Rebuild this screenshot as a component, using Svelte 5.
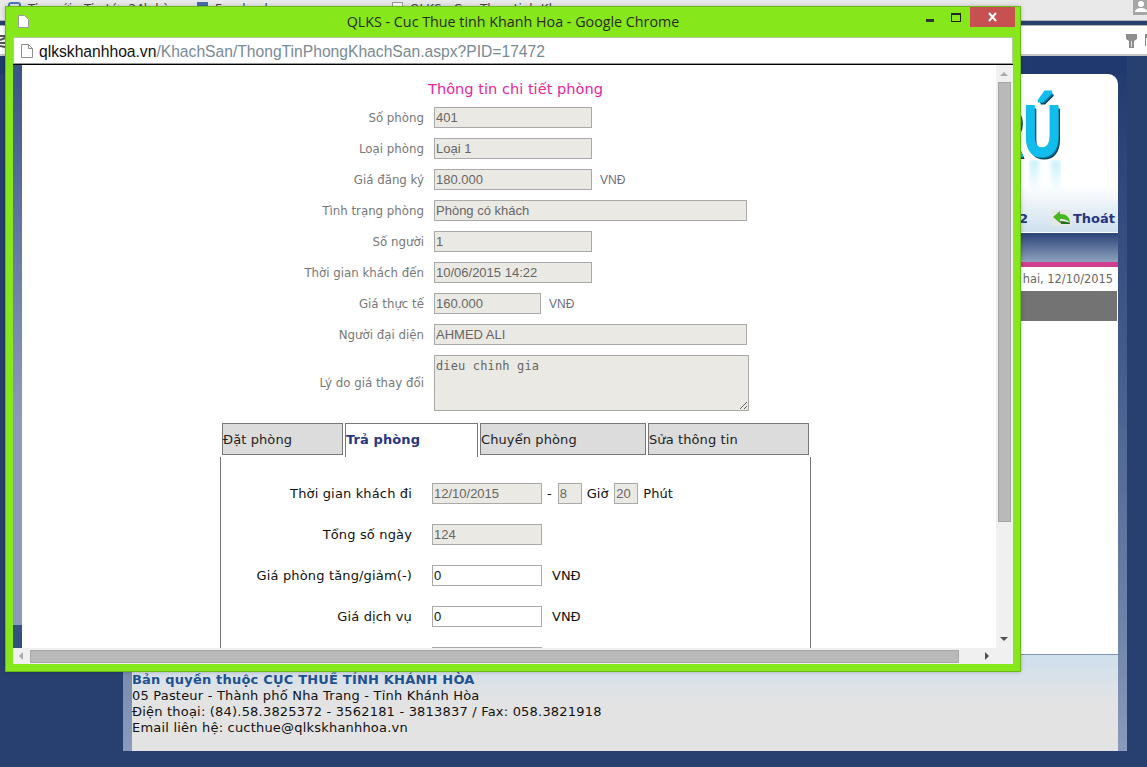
<script>
    // Rooms form, top part of the popup
    const topRows = [
        { label: "Số phòng", value: "401", size: "md" },
        { label: "Loại phòng", value: "Loại 1", size: "md" },
        { label: "Giá đăng ký", value: "180.000", size: "md", unit: "VNĐ" },
        { label: "Tình trạng phòng", value: "Phòng có khách", size: "lg" },
        { label: "Số người", value: "1", size: "md" },
        { label: "Thời gian khách đến", value: "10/06/2015 14:22", size: "md" },
        { label: "Giá thực tế", value: "160.000", size: "sm", unit: "VNĐ" },
        { label: "Người đại diện", value: "AHMED ALI", size: "lg" }
    ];

    const tabs = ["Đặt phòng", "Trả phòng", "Chuyển phòng", "Sửa thông tin"];
    const activeTab = "Trả phòng";

    // Rows inside the "Trả phòng" tab
    const payRows = [
        { label: "Tổng số ngày", value: "124", readonly: true },
        { label: "Giá phòng tăng/giảm(-)", value: "0", unit: "VNĐ" },
        { label: "Giá dịch vụ", value: "0", unit: "VNĐ" },
        { label: "", value: "" }
    ];
</script>

<div class="desktop">
    <!-- Browser behind the popup -->
    <div class="tabstrip">
        <span class="btab"><i class="fav round"></i>Tin mới - Tin tức 24h hàng ngày</span>
        <span class="btab fb"><i class="fav blue"></i>Facebook</span>
        <span class="btab third"><i class="fav paper"></i>QLKS - Cuc Thue tinh Khanh Hoa</span>
        <span class="avatar">
            <svg width="14" height="15" viewBox="0 0 14 15"><circle cx="8" cy="4" r="3" fill="#fff"/><path d="M2 12c0-3 3-4 6-4s6 1 6 4z" fill="#fff"/></svg>
        </span>
    </div>
    <div class="toolbar">
        <svg class="tool-left" width="6" height="14" viewBox="0 0 6 14"><path d="M0 2h5M0 6l5-2M0 9h6M0 12l5 1" stroke="#555" stroke-width="2" fill="none"/></svg>
        <svg width="11" height="15" viewBox="0 0 11 15"><path d="M0 1h11v5l-3 2v7H3V8L0 6z" fill="#8d8d8d"/><path d="M5.500 8v6" stroke="#ddd"/></svg>
        <svg width="2" height="12" viewBox="0 0 2 12"><path d="M0 0h2v4H1v8H0z" fill="#888"/></svg>
    </div>
    <div class="page">
        <div class="card">
            <header class="head">
                <div class="logo">RÚ</div>
                <div class="reflect"></div>
                <nav class="nav">
                    <span>2</span>
                    <span class="logout">
                        <svg width="20" height="16" viewBox="0 0 20 16"><rect width="20" height="16" fill="#e4e8e6"/><path d="M1 7l7-6v3c6 0 10 3 10 9-2-3-5-4-10-4v4z" fill="#45b81f"/><path d="M8 11c5 0 8 1 10 2v1H9z" fill="#2b6d1a"/></svg>
                        Thoát
                    </span>
                </nav>
            </header>
            <div class="band"></div>
            <div class="date">Thứ hai, 12/10/2015</div>
            <div class="graybar"></div>
            <div class="main"></div>
            <footer class="foot">
                <b>Bản quyền thuộc CỤC THUẾ TỈNH KHÁNH HÒA</b>
                <div>05 Pasteur - Thành phố Nha Trang - Tỉnh Khánh Hòa</div>
                <div>Điện thoại: (84).58.3825372 - 3562181 - 3813837 / Fax: 058.3821918</div>
                <div>Email liên hệ: cucthue@qlkskhanhhoa.vn</div>
            </footer>
        </div>
    </div>

    <!-- Popup window -->
    <div class="window">
        <div class="titlebar">
            <svg class="pageicon" width="11" height="13" viewBox="0 0 11 13"><path d="M.5.5h6l4 4v8H.5z" fill="#fff" stroke="#9a9a9a"/></svg>
            <span class="wintitle">QLKS - Cuc Thue tinh Khanh Hoa - Google Chrome</span>
            <div class="controls">
                <span class="min"></span>
                <span class="max"></span>
                <span class="close">
                    <svg width="11" height="10" viewBox="0 0 11 10"><path d="M2 1l7 8M9 1l-7 8" stroke="#fff" stroke-width="2"/></svg>
                </span>
            </div>
        </div>
        <div class="urlbar">
            <svg width="14" height="16" viewBox="0 0 14 16"><path d="M1.500 1.500h7l4 4v9h-11z" fill="#fff" stroke="#8f8f8f"/><path d="M8.500 1.500v4h4" fill="none" stroke="#8f8f8f"/></svg>
            <span class="url"><span class="host">qlkskhanhhoa.vn</span>/KhachSan/ThongTinPhongKhachSan.aspx?PID=17472</span>
        </div>
        <div class="viewport">
            <div class="gutter"></div>
            <div class="content">
                <div class="form">
                    <h1>Thông tin chi tiết phòng</h1>
                    <div class="rows">
                        {#each topRows as row}
                            <label for={row.label}>{row.label}</label>
                            <div class="field">
                                <input id={row.label} class={row.size} value={row.value} readonly />
                                {#if row.unit}<span class="unit">{row.unit}</span>{/if}
                            </div>
                        {/each}
                        <label for="reason">Lý do giá thay đổi</label>
                        <textarea id="reason" readonly>dieu chinh gia</textarea>
                    </div>
                    <div class="tabs">
                        {#each tabs as tab}
                            <div class="tab" class:active={tab === activeTab}>{tab}</div>
                        {/each}
                    </div>
                    <div class="panel">
                        <div class="payrows">
                            <span class="paylabel">Thời gian khách đi</span>
                            <div class="field dark">
                                <input class="date-in" value="12/10/2015" readonly />
                                <span class="dash">-</span>
                                <input class="tiny" value="8" readonly />
                                <span class="hour">Giờ</span>
                                <input class="tiny" value="20" readonly />
                                <span>Phút</span>
                            </div>
                            {#each payRows as row}
                                <span class="paylabel">{row.label}</span>
                                <div class="field dark">
                                    <input class="date-in" class:edit={!row.readonly} value={row.value} readonly={row.readonly} />
                                    {#if row.unit}<span class="payunit">{row.unit}</span>{/if}
                                </div>
                            {/each}
                        </div>
                    </div>
                </div>
            </div>
            <div class="vscroll">
                <i class="arrow up"></i>
                <div class="vthumb"></div>
                <i class="arrow down"></i>
            </div>
        </div>
        <div class="hscroll">
            <i class="arrow left"></i>
            <div class="hthumb"></div>
            <i class="arrow right"></i>
        </div>
    </div>
</div>

<style>
    :global(body) {
        margin: 0;
        background: #27406f;
    }

    .desktop {
        position: relative;
        width: 1147px;
        height: 767px;
        overflow: hidden;
        background: #27406f;
        font-family: "DejaVu Sans", sans-serif;
        font-size: 12px;
    }

    /* Browser behind */
    .tabstrip {
        height: 20px;
        background: #e9e9e9;
        border-bottom: 1px solid #b5b5b5;
        display: flex;
        font-size: 12px;
        color: #444;
        overflow: hidden;
        position: relative;
    }

    .btab {
        display: flex;
        gap: 7px;
        height: 18px;
        box-sizing: border-box;
        padding: 2px 0 0 8px;
        width: 188px;
        white-space: nowrap;
        overflow: hidden;
    }

    .btab.fb {
        width: 194px;
        padding-left: 9px;
    }

    .btab.third {
        padding-left: 10px;
    }

    .fav {
        width: 11px;
        height: 11px;
        flex: none;
        display: block;
    }

    .round { border: 2px solid #4a78b8; border-radius: 3px; width: 9px; height: 9px; }
    .blue { background: #4a6ea9; }
    .paper { background: #fff; border: 1px solid #999; width: 9px; height: 10px; }

    .avatar {
        position: absolute;
        right: 0;
        top: 0;
        width: 14px;
        height: 15px;
        background: #a6a6a6;
    }

    .avatar svg { display: block; }

    .toolbar {
        height: 28px;
        margin-top: 4px;
        background: #fff;
        border-top: 1px solid #b5b5b5;
        border-bottom: 2px solid #c8c8c8;
        display: flex;
        align-items: center;
        justify-content: flex-end;
        gap: 8px;
        position: relative;
    }

    .tool-left {
        position: absolute;
        left: 0;
        top: 8px;
    }

    .page {
        padding: 18px 20px 16px 123px;
        background: linear-gradient(to right, #203a70 1127px, #27406f 1127px) no-repeat;
        background-size: 100% 18px;
    }

    .card {
        width: 986px;
        padding: 0 9px;
        background: linear-gradient(#233c70, #42598a 40%, #6d82a8 80%, #8a9abb);
        display: flex;
        flex-direction: column;
        height: 677px;
    }

    .head {
        position: relative;
        height: 158px;
        background: linear-gradient(#fff 0, #fff 70%, #cfe0ee 100%);
        border-radius: 0 10px 0 0;
        overflow: hidden;
        border-bottom: 1px solid #fff;
    }

    .logo {
        position: absolute;
        right: 57px;
        top: 21px;
        font: bold 72px/1 "Liberation Sans", sans-serif;
        color: #10bdec;
        -webkit-text-stroke: 2px #10bdec;
        text-shadow: 2px 2px 0 #0a6f93, 3px 3px 0 #063a50;
        transform: scaleX(0.72);
        transform-origin: right center;
    }

    /* Faded mirror image under the logo */
    .reflect {
        position: absolute;
        right: 57px;
        top: 86px;
        width: 32px;
        height: 32px;
        background: linear-gradient(to right, #9fe6f8 30%, transparent 30%, transparent 70%, #9fe6f8 70%);
        filter: blur(2px);
        opacity: 0.6;
        -webkit-mask-image: linear-gradient(#000, transparent);
        mask-image: linear-gradient(#000, transparent);
    }

    .nav {
        position: absolute;
        right: 3px;
        bottom: 6px;
        display: flex;
        align-items: center;
        gap: 24px;
        font-size: 13px;
        font-weight: bold;
        color: #28367f;
    }

    .logout {
        display: flex;
        align-items: center;
        gap: 1px;
    }

    .band {
        height: 29px;
        background: linear-gradient(#2a4477, #8fa1be);
        border-bottom: 5px solid #d0408f;
    }

    .date {
        height: 24px;
        line-height: 24px;
        background: #fff;
        text-align: right;
        padding-right: 5px;
        font-size: 11.4px;
        color: #666;
    }

    .graybar {
        height: 30px;
        background: #737373;
        margin-right: 1px;
        box-shadow: 1px 0 0 #fff;
    }

    .main {
        flex: 1;
        background: #fff;
        border-bottom: 1px solid #7f93b4;
    }

    .foot {
        height: 96px;
        padding-top: 17px;
        box-sizing: border-box;
        background: linear-gradient(#cfe0ee, #e3e3e3 50%);
        line-height: 16px;
        font-size: 13px;
        letter-spacing: 0.2px;
        color: #111;
    }

    .foot b {
        color: #1f5190;
    }

    /* Popup */
    .window {
        position: absolute;
        left: 5px;
        top: 6px;
        width: 1016px;
        height: 666px;
        box-sizing: border-box;
        background: #86e71a;
        border: 1px solid #6cb81a;
        padding: 0 7px 7px;
        display: flex;
        flex-direction: column;
        box-shadow: 0 0 4px rgba(0, 0, 0, 0.25);
    }

    .titlebar {
        height: 30px;
        flex: none;
        position: relative;
        display: flex;
        justify-content: center;
        padding-top: 5px;
        box-sizing: border-box;
    }

    .pageicon {
        position: absolute;
        left: 5px;
        top: 8px;
    }

    .wintitle {
        font: 14.3px/20px "Open Sans", sans-serif;
        color: #2a2a20;
    }

    .controls {
        position: absolute;
        right: -2px;
        top: 0;
        display: flex;
        align-items: flex-start;
        height: 20px;
    }

    .min {
        width: 8px;
        height: 3px;
        background: #333;
        margin: 12px 17px 0 0;
    }

    .max {
        width: 8px;
        height: 6px;
        border: 1px solid #222;
        border-top-width: 2px;
        margin: 6px 9px 0 0;
    }

    .close {
        width: 45px;
        height: 20px;
        background: #c75050;
        display: flex;
        align-items: center;
        justify-content: center;
    }

    .urlbar {
        height: 27px;
        flex: none;
        background: #fff;
        border: 1px solid #b4c8a4;
        border-bottom-color: #999;
        box-sizing: border-box;
        display: flex;
        align-items: center;
        gap: 5px;
        padding-left: 6px;
    }

    .url {
        font: 15.65px "Liberation Sans", sans-serif;
        color: #7a8a94;
        white-space: nowrap;
        padding-top: 2px;
    }

    .host {
        color: #111;
    }

    .viewport {
        flex: 1;
        min-height: 0;
        display: flex;
        border-top: 1px solid #000;
    }

    .gutter {
        width: 9px;
        flex: none;
        background: linear-gradient(#3a5484, #5e749e 25%, #8a9abb 60%, #8a9abb 560px, #34507e 560px);
    }

    .content {
        flex: 1;
        min-width: 0;
        background: #fff;
        overflow: hidden;
    }

    .form {
        width: 591px;
        margin-left: 198px;
    }

    h1 {
        margin: 0;
        padding-top: 15px;
        height: 42px;
        line-height: 18px;
        box-sizing: border-box;
        text-align: center;
        font-size: 14.6px;
        font-weight: normal;
        color: #e8259b;
    }

    .rows {
        display: grid;
        grid-template-columns: 204px 1fr;
        column-gap: 10px;
        row-gap: 10px;
        align-items: center;
    }

    label {
        text-align: right;
        font-size: 11.8px;
        color: #777;
    }

    .field {
        display: flex;
        align-items: center;
        gap: 8px;
        height: 21px;
        color: #6b7080;
    }

    input, textarea {
        box-sizing: border-box;
        height: 21px;
        margin: 0;
        padding: 0 1px;
        border: 1px solid #a9a9a9;
        background: #ebe9e3;
        color: #666;
        font: 13px "Liberation Sans", sans-serif;
        border-radius: 0;
        outline: none;
    }

    .md { width: 158px; }
    .lg { width: 313px; }
    .sm { width: 107px; }

    .unit {
        font-family: "Liberation Sans", sans-serif;
        font-size: 12px;
    }

    textarea {
        display: block;
        width: 315px;
        height: 56px;
        font: 12px "DejaVu Sans Mono", monospace;
        letter-spacing: 0.14px;
        padding: 3px 1px;
    }

    .tabs {
        display: flex;
        gap: 2px;
        margin: 12px 0 0 2px;
        height: 32px;
    }

    .tab {
        box-sizing: border-box;
        height: 32px;
        border: 1px solid #777;
        background: #dcdcdc;
        line-height: 32px;
        font-size: 13px;
        letter-spacing: 0.1px;
        color: #222;
        width: 121px;
    }

    .tab:nth-child(2) { width: 133px; }
    .tab:nth-child(3) { width: 166px; }
    .tab:nth-child(4) { width: 161px; }

    .tab.active {
        background: #fff;
        border-bottom: 0;
        height: 34px;
        font-weight: bold;
        color: #28367f;
    }

    .panel {
        margin-top: 2px;
        border: solid #777;
        border-width: 0 1px;
        height: 200px;
        padding-top: 26px;
        box-sizing: border-box;
        overflow: hidden;
    }

    .payrows {
        display: grid;
        grid-template-columns: 191px 1fr;
        column-gap: 20px;
        row-gap: 20px;
        align-items: center;
    }

    .paylabel {
        text-align: right;
        color: #111;
        font-size: 13px;
        letter-spacing: 0.15px;
    }

    .dark {
        gap: 5px;
        color: #111;
        font-size: 13px;
    }

    .dash { margin-right: 1px; }
    .hour { margin-right: 1px; }
    .date-in { width: 110px; }
    .tiny { width: 24px; }
    .edit { background: #fff; color: #111; }
    .payunit { margin-left: 5px; }

    .vscroll {
        width: 17px;
        flex: none;
        background: #f0f0f0;
        position: relative;
    }

    .vthumb {
        box-sizing: border-box;
        width: 13px;
        margin: 17px 0 0 2px;
        height: 440px;
        background: #b9b9b9;
        border: 1px solid #a6a6a6;
    }

    .hscroll {
        height: 16px;
        flex: none;
        background: #f0f0f0;
        display: flex;
        align-items: center;
        position: relative;
        padding-left: 17px;
    }

    .hthumb {
        box-sizing: border-box;
        width: 929px;
        height: 13px;
        background: #b9b9b9;
        border: 1px solid #a6a6a6;
    }

    .arrow {
        position: absolute;
        width: 0;
        height: 0;
        display: block;
        border: 4px solid transparent;
    }

    .up { top: 7px; left: 4px; border-bottom-color: #aaa; border-top-width: 0; }
    .down { bottom: 7px; left: 4px; border-top-color: #505050; border-bottom-width: 0; }
    .left { left: 6px; top: 4px; border-right-color: #aaa; border-left-width: 0; }
    .right { right: 24px; top: 4px; border-left-color: #505050; border-right-width: 0; }
</style>
